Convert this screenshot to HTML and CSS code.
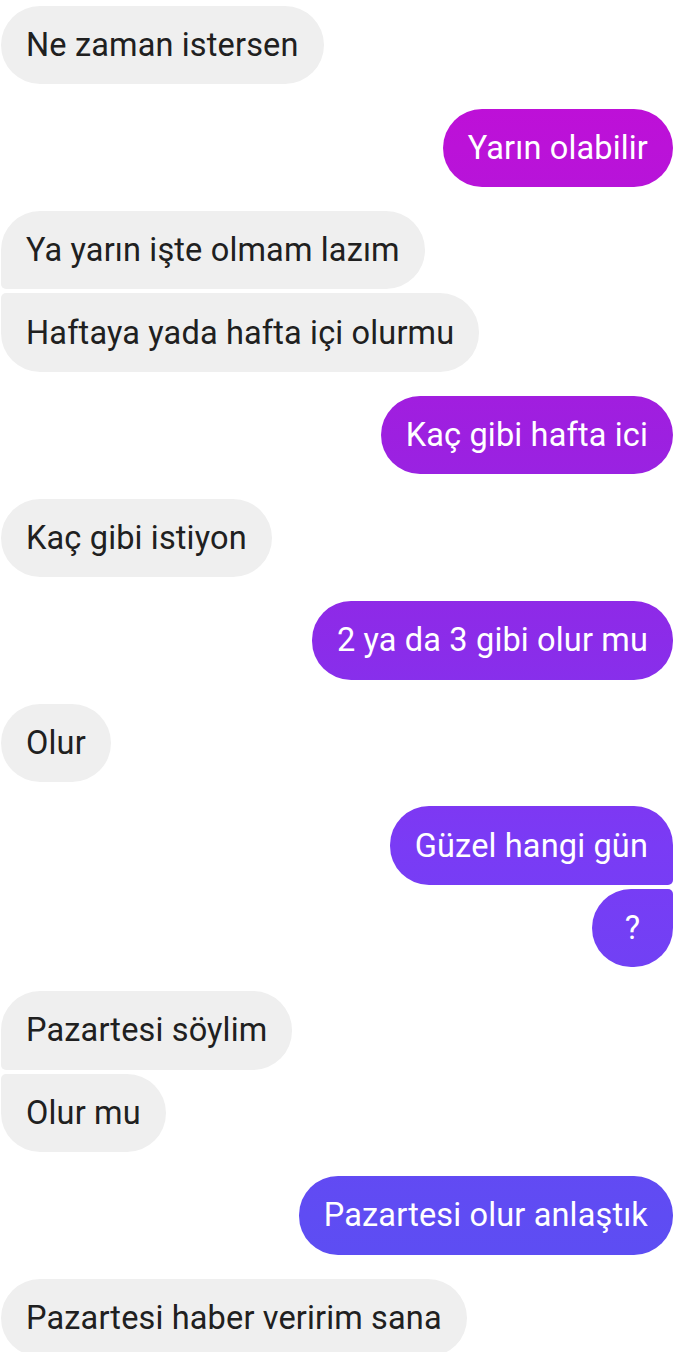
FILE: index.html
```html
<!DOCTYPE html>
<html lang="tr">
<head>
    <meta charset="UTF-8">
    <meta name="viewport" content="width=device-width, initial-scale=1.0">
    <title>chat</title>

    <link rel="stylesheet" href="styles.css">
</head>
<body>

    <div class="chat">

        <div class="group in">
            <div class="bubble">Ne zaman istersen</div>
        </div>

        <div class="group out">
            <div class="bubble">Yarın olabilir</div>
        </div>

        <div class="group in">
            <div class="bubble">Ya yarın işte olmam lazım</div>
            <div class="bubble">Haftaya yada hafta içi olurmu</div>
        </div>

        <div class="group out">
            <div class="bubble">Kaç gibi hafta ici</div>
        </div>

        <div class="group in">
            <div class="bubble">Kaç gibi istiyon</div>
        </div>

        <div class="group out">
            <div class="bubble">2 ya da 3 gibi olur mu</div>
        </div>

        <div class="group in">
            <div class="bubble">Olur</div>
        </div>

        <div class="group out">
            <div class="bubble">Güzel hangi gün</div>
            <div class="bubble">?</div>
        </div>

        <div class="group in">
            <div class="bubble">Pazartesi söylim</div>
            <div class="bubble">Olur mu</div>
        </div>

        <div class="group out">
            <div class="bubble">Pazartesi olur anlaştık</div>
        </div>

        <div class="group in">
            <div class="bubble">Pazartesi haber veririm sana</div>
        </div>

    </div>

</body>
</html>
```

FILE: styles.css
```css
body{
    margin: 0;
    background: #ffffff;
    font-family: Roboto, "Noto Sans", sans-serif;
    overflow: hidden;
}

.chat{
    display: flex;
    flex-direction: column;
    gap: 24.3px;
    padding: 6px 17px 0px 1px;
}

.group{
    display: flex;
    flex-direction: column;
    gap: 4px;
}

.group.in{
    align-items: flex-start;
}

.group.out{
    align-items: flex-end;
}

.bubble{
    box-sizing: border-box;
    height: 78.3px;
    min-width: 81px;
    padding: 0px 25px;
    border-radius: 39px;
    display: flex;
    align-items: center;
    justify-content: center;
    font-size: 32.5px;
    letter-spacing: 0.15px;
    white-space: nowrap;
}

.in .bubble{
    background: #efefef;
    color: #202020;
}

.out .bubble{
    color: #ffffff;
    background: linear-gradient(to bottom,
        #c40bd6 0px,
        #bb12d8 148px,
        #9d20e0 436px,
        #8b2ce9 641px,
        #7a3bf5 846px,
        #5f4cf3 1215px,
        #5850f2 1352px) fixed;
}

/* joined bubbles get a tight corner where they meet */
.in .bubble:first-child:not(:last-child){
    border-bottom-left-radius: 5px;
}

.in .bubble:last-child:not(:first-child){
    border-top-left-radius: 5px;
}

.out .bubble:first-child:not(:last-child){
    border-bottom-right-radius: 5px;
}

.out .bubble:last-child:not(:first-child){
    border-top-right-radius: 5px;
}
```
